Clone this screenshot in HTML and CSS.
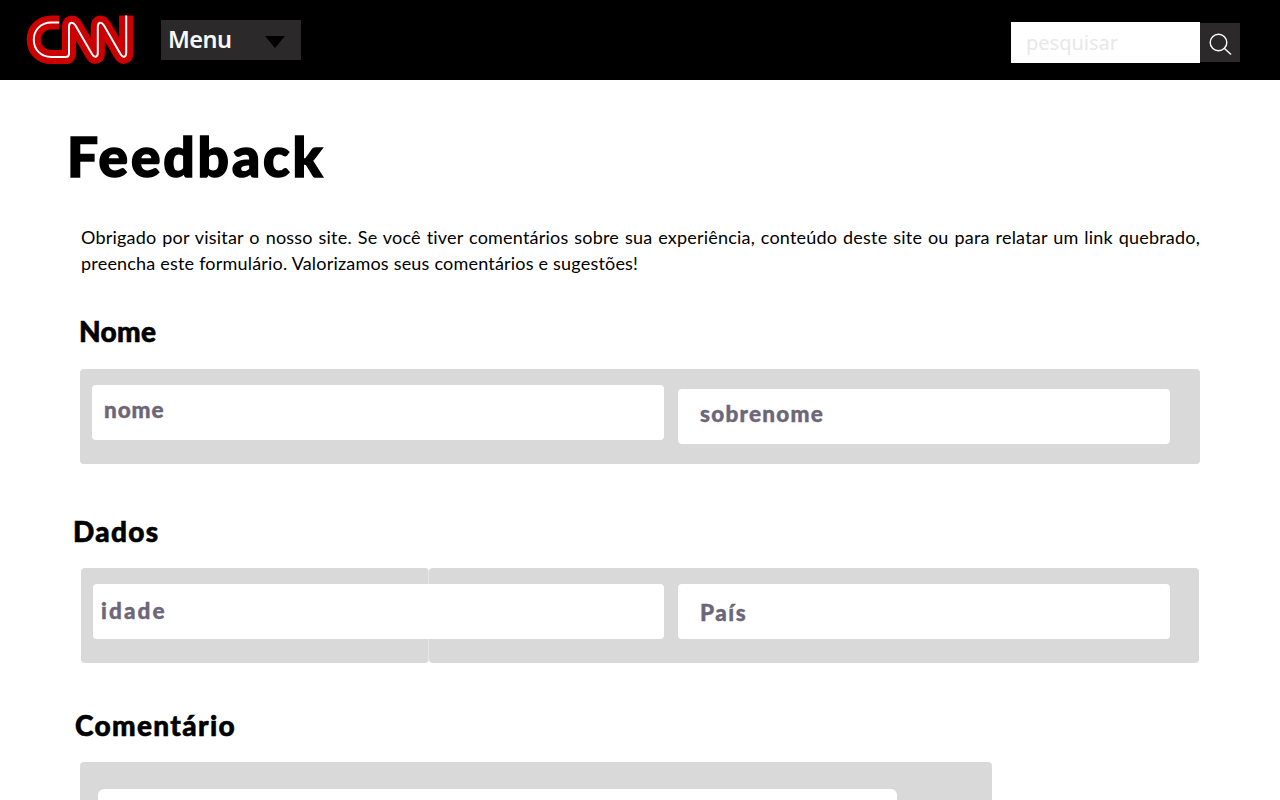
FILE: index.html
```html
<!DOCTYPE html>
<html lang="pt-BR">
<head>
<meta charset="utf-8">
<title>CNN - Feedback</title>
<link rel="stylesheet" href="styles.css">
</head>
<body>
<header class="topbar">
  <svg class="logo" width="108" height="50" viewBox="26 15 108 50" fill="none" aria-label="CNN">
    <path stroke="#cc0000" stroke-width="14.2" stroke-linejoin="round" d="M59.3 22.5H51.5C27.900 22.500 27.900 57 51.500 57H65.500Q69 57 69 53.500V27C69 21.500 73 21.500 75.500 25.500L92 54C94.500 58.500 97.800 57 97.800 53V27C97.800 21.500 101.500 21.500 104 25.500L120.500 54C123 58.500 126.200 57 126.200 53V15.500"/>
    <path stroke="#fff" stroke-width="2" d="M59.3 22.5H51.5C27.900 22.500 27.900 57 51.500 57H65.500Q69 57 69 53.500V27C69 21.500 73 21.500 75.500 25.500L92 54C94.500 58.500 97.800 57 97.800 53V27C97.800 21.500 101.500 21.500 104 25.500L120.500 54C123 58.500 126.200 57 126.200 53V15.500"/>
  </svg>
  <button class="menu"><span class="menu-label">Menu</span>
    <svg class="caret" width="22" height="14" viewBox="0 0 22 14"><path d="M1 1H21L11 13Z"/></svg>
  </button>
  <div class="search">
    <div class="search-field"><span class="search-text">pesquisar</span></div>
    <button class="search-button" aria-label="pesquisar">
      <svg width="24" height="24" viewBox="0 0 24 24" fill="none" stroke="#fff" stroke-width="1.4"><circle cx="10.5" cy="10.5" r="8.3"/><path d="M16.500 16.500L23 22.500"/></svg>
    </button>
  </div>
</header>
<main class="page">
  <h1 class="title">Feedback</h1>
  <p class="intro">Obrigado por visitar o nosso site. Se você tiver comentários sobre sua experiência, conteúdo deste site ou para relatar um link quebrado, preencha este formulário. Valorizamos seus comentários e sugestões!</p>
  <h2 class="heading heading-name">Nome</h2>
  <section class="panel panel-name">
    <div class="field field-first"><span class="hint hint-first">nome</span></div>
    <div class="field field-last"><span class="hint hint-last">sobrenome</span></div>
  </section>
  <h2 class="heading heading-data">Dados</h2>
  <section class="panel-pair">
    <div class="panel-back panel-back-left"></div>
    <div class="panel-back panel-back-right"></div>
    <div class="pair-fields">
      <div class="field field-age"><span class="hint hint-age">idade</span></div>
      <div class="field field-country"><span class="hint hint-country">País</span></div>
    </div>
  </section>
  <h2 class="heading heading-comment">Comentário</h2>
  <section class="panel panel-comment"><div class="comment-box"></div></section>
</main>
</body>
</html>
```
FILE: styles.css
```css
* { box-sizing: border-box; }
html, body { margin: 0; height: 800px; overflow: hidden; }
body { background: #fff; color: #000; font-family: Lato, sans-serif; }
button { border: 0; padding: 0; font: inherit; }
.topbar { display: flex; align-items: flex-start; height: 80px; background: #000; padding: 15px 40px 0 26px; }
.logo { flex: none; }
.menu { display: flex; align-items: center; justify-content: space-between; width: 140px; height: 40px; margin: 5px 0 0 27px; padding: 0 15px 0 7px; background: #2b292a; color: #f8f8f8; }
.menu-label { margin-top: -3px; font-family: "Noto Sans", sans-serif; font-weight: 600; font-size: 23.5px; line-height: 40px; letter-spacing: -0.5px; }
.caret { margin-top: 4px; fill: #000; }
.search { display: flex; align-items: flex-start; margin: 7px 0 0 auto; }
.search-field { width: 189px; height: 41px; padding-left: 15px; background: #fff; }
.search-text { font: 20px/42px "Noto Sans", sans-serif; color: #e8e8e8; }
.search-button { display: flex; align-items: center; justify-content: center; width: 40px; height: 39px; margin-top: 1px; padding: 2px 0 0 0; background: #2b292a; }
.page { height: 720px; overflow: hidden; padding: 42px 80px 0; }
.title { margin: 0 0 0 -13px; font-size: 55px; line-height: 68px; font-weight: 900; letter-spacing: 2.9px; -webkit-text-stroke: 1.6px #000; }
.intro { margin: 34px 0 0 1px; width: 1119px; font-size: 18px; line-height: 26px; text-align: justify; letter-spacing: 0.2px; }
.heading { font-size: 28px; line-height: 34px; font-weight: 900; margin: 0; letter-spacing: 1.35px; -webkit-text-stroke: 0.6px #000; }
.heading-name { margin: 38px 0 0 -1px; letter-spacing: 0.3px; }
.heading-data { margin: 50px 0 0 -7px; }
.heading-comment { margin: 45px 0 0 -5px; }
.panel { display: flex; align-items: flex-start; background: #d9d9d9; border-radius: 4px; }
.panel-name { height: 95px; margin-top: 21px; padding: 16px 30px 0 12px; }
.panel-pair { display: grid; grid-template-columns: 348px 770px; grid-template-rows: 95px; margin: 20px 0 0 1px; }
.panel-back { grid-row: 1; background: #d9d9d9; border-radius: 4px; }
.panel-back-left { grid-column: 1; border-right: 1px solid #e6e6e6; }
.panel-back-right { grid-column: 2; }
.pair-fields { grid-row: 1; grid-column: 1 / 3; display: flex; align-items: flex-start; padding: 16px 0 0 12px; }
.field { flex: none; height: 55px; border-radius: 4px; background: #fff; }
.field-first { width: 572px; padding-left: 12px; }
.field-last { width: 492px; margin: 4px 0 0 14px; padding-left: 22px; }
.field-age { width: 571px; padding-left: 8px; }
.field-country { width: 492px; margin-left: 14px; padding-left: 22px; }
.hint { color: #6c6678; font-size: 22.5px; line-height: 50px; font-weight: 900; letter-spacing: 1.25px; -webkit-text-stroke: 0.4px #6c6678; }
.hint-first { letter-spacing: 0.9px; }
.hint-age { line-height: 54px; letter-spacing: 2.1px; }
.hint-country { line-height: 58px; letter-spacing: 1.5px; }
.panel-comment { width: 912px; height: 120px; margin-top: 20px; padding: 27px 0 0 18px; }
.comment-box { width: 799px; height: 90px; border-radius: 6px; background: #fff; }
```
